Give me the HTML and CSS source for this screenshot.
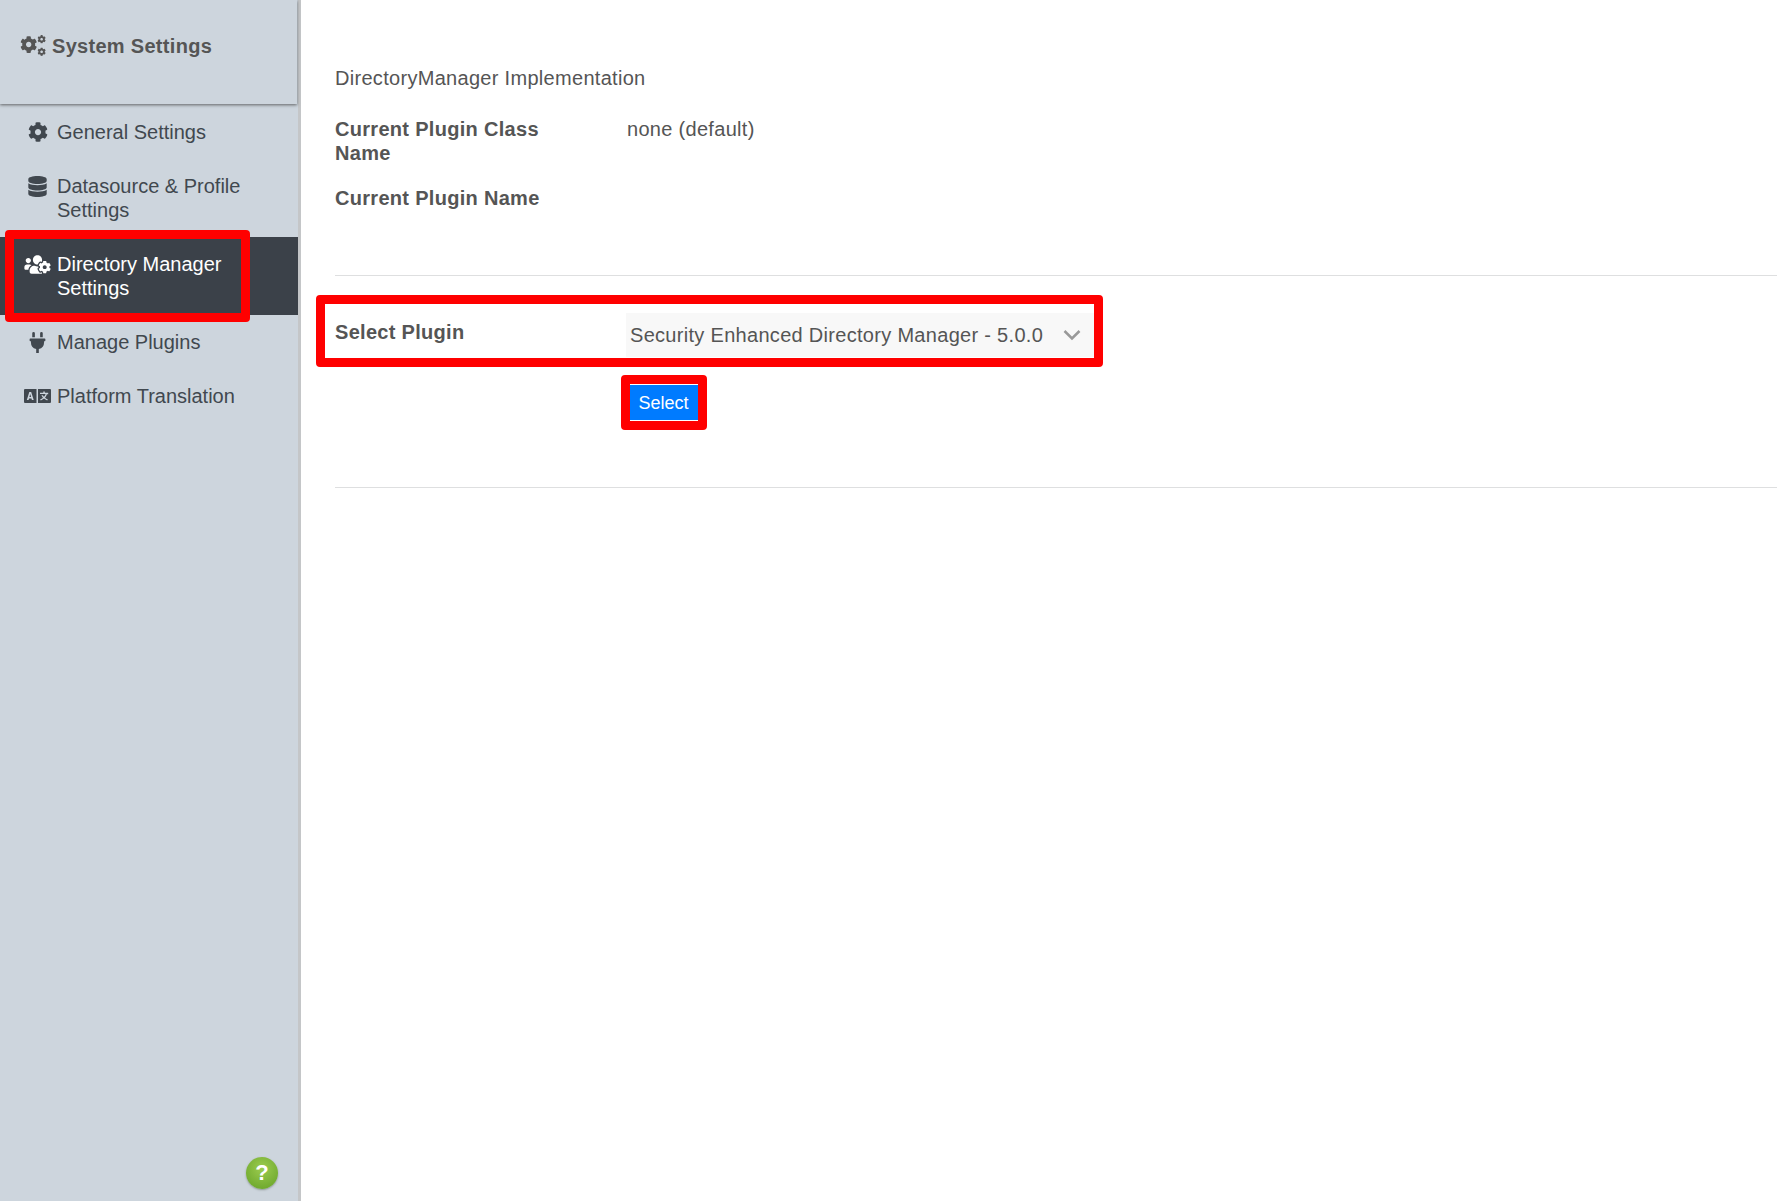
FILE: index.html
```html
<!DOCTYPE html>
<html lang="en">
<head>
<meta charset="utf-8">
<title>System Settings</title>
<link rel="stylesheet" href="styles.css">
</head>
<body>
<svg class="defs" aria-hidden="true">
  <symbol id="cog" viewBox="0 0 512 512"><path d="M487.4 315.7l-42.6-24.6c4.3-23.2 4.3-47 0-70.2l42.6-24.6c4.9-2.8 7.1-8.6 5.5-14-11.1-35.6-30-67.8-54.7-94.6-3.8-4.1-10-5.1-14.8-2.3L380.8 110c-17.9-15.4-38.5-27.3-60.8-35.1V25.8c0-5.6-3.9-10.5-9.4-11.7-36.7-8.2-74.3-7.8-109.2 0-5.5 1.2-9.4 6.1-9.4 11.7V75c-22.2 7.9-42.8 19.8-60.8 35.1L88.7 85.5c-4.9-2.8-11-1.9-14.8 2.3-24.7 26.7-43.6 58.9-54.7 94.6-1.7 5.4.6 11.2 5.5 14L67.3 221c-4.3 23.2-4.3 47 0 70.2l-42.6 24.6c-4.9 2.8-7.1 8.6-5.5 14 11.1 35.6 30 67.8 54.7 94.6 3.8 4.1 10 5.1 14.8 2.3l42.6-24.6c17.9 15.4 38.5 27.3 60.8 35.1v49.2c0 5.6 3.9 10.5 9.4 11.7 36.7 8.2 74.3 7.8 109.2 0 5.5-1.2 9.4-6.1 9.4-11.7v-49.2c22.2-7.9 42.8-19.8 60.8-35.1l42.6 24.6c4.9 2.8 11 1.9 14.8-2.3 24.7-26.7 43.6-58.9 54.7-94.6 1.5-5.5-.7-11.3-5.6-14.1zM256 336c-44.1 0-80-35.9-80-80s35.9-80 80-80 80 35.9 80 80-35.9 80-80 80z"/></symbol>
</svg>
<div class="app">
  <aside class="sidebar">
    <header class="side-head">
      <svg class="gears" viewBox="0 0 27 24"><use href="#cog" x="0" y="2" width="18" height="18"/><use href="#cog" x="18" y="1" width="9" height="9"/><use href="#cog" x="18" y="14" width="9" height="9"/></svg>
      <span>System Settings</span>
    </header>
    <nav class="nav">
      <a class="nav-item"><span class="nav-icon"><svg class="i-cog" viewBox="0 0 512 512"><use href="#cog"/></svg></span><span>General Settings</span></a>
      <a class="nav-item"><span class="nav-icon"><svg class="i-db" viewBox="0 0 448 512"><path d="M448 73.143v45.714C448 159.143 347.667 192 224 192S0 159.143 0 118.857V73.143C0 32.857 100.333 0 224 0s224 32.857 224 73.143zM448 176v102.857C448 319.143 347.667 352 224 352S0 319.143 0 278.857V176c48.125 33.143 136.208 48.572 224 48.572S399.874 209.143 448 176zm0 160v102.857C448 479.143 347.667 512 224 512S0 479.143 0 438.857V336c48.125 33.143 136.208 48.572 224 48.572S399.874 369.143 448 336z"/></svg></span><span>Datasource &amp; Profile Settings</span></a>
      <a class="nav-item active"><span class="nav-icon"><svg class="i-users" viewBox="0 0 640 512"><path d="M610.5 341.3c2.6-14.1 2.6-28.5 0-42.6l25.8-14.9c3-1.7 4.3-5.2 3.3-8.5-6.7-21.6-18.2-41.2-33.2-57.4-2.3-2.5-6-3.1-9-1.4l-25.8 14.9c-10.9-9.3-23.4-16.5-36.9-21.3v-29.8c0-3.4-2.4-6.4-5.7-7.1-22.3-5-45-4.8-66.2 0-3.3.7-5.7 3.7-5.7 7.1v29.8c-13.5 4.8-26 12-36.9 21.3l-25.8-14.9c-2.9-1.7-6.7-1.1-9 1.4-15 16.2-26.5 35.8-33.2 57.4-1 3.3.4 6.8 3.3 8.5l25.8 14.9c-2.6 14.1-2.6 28.5 0 42.6l-25.8 14.9c-3 1.7-4.3 5.2-3.3 8.5 6.7 21.6 18.2 41.1 33.2 57.4 2.3 2.5 6 3.1 9 1.4l25.8-14.9c10.9 9.3 23.4 16.5 36.9 21.3v29.8c0 3.4 2.4 6.4 5.7 7.1 22.3 5 45 4.8 66.2 0 3.3-.7 5.7-3.7 5.7-7.1v-29.8c13.5-4.8 26-12 36.9-21.3l25.8 14.9c2.9 1.7 6.7 1.1 9-1.4 15-16.2 26.5-35.8 33.2-57.4 1-3.3-.4-6.8-3.3-8.5l-25.8-14.9zM496 368.5c-26.8 0-48.5-21.8-48.5-48.5s21.8-48.5 48.5-48.5 48.5 21.8 48.5 48.5-21.7 48.5-48.5 48.5zM96 224c35.3 0 64-28.7 64-64s-28.7-64-64-64-64 28.7-64 64 28.7 64 64 64zm224 32c1.9 0 3.7-.5 5.6-.6 8.3-21.7 20.5-42.1 36.3-59.2 7.4-8 17.9-12.6 28.9-12.6 6.9 0 13.7 1.8 19.6 5.3l7.9 4.6c.8-.5 1.6-.9 2.4-1.4 7-14.6 11.2-30.8 11.2-48 0-61.9-50.1-112-112-112S208 82.1 208 144c0 61.9 50.1 112 112 112zm105.2 194.5c-2.3-1.2-4.6-2.6-6.8-3.9-8.2 4.8-15.3 9.8-27.5 9.8-10.9 0-21.4-4.6-28.9-12.6-18.3-19.8-32.3-43.9-40.2-69.6-10.7-34.5 24.9-49.7 25.8-50.3-.1-2.6-.1-5.2 0-7.8l-7.9-4.6c-3.8-2.2-7-5-9.8-8.1-3.3.2-6.5.6-9.8.6-24.6 0-47.6-6-68.5-16h-8.3C179.6 288 128 339.6 128 403.2V432c0 26.5 21.5 48 48 48h255.4c-3.7-6-6.2-12.8-6.2-20.1v-9.4zM173.1 274.6C161.5 263.1 145.6 256 128 256H64c-35.3 0-64 28.7-64 64v32c0 17.7 14.3 32 32 32h65.9c6.3-47.4 34.9-87.3 75.2-109.4z"/></svg></span><span>Directory Manager Settings</span></a>
      <a class="nav-item"><span class="nav-icon"><svg class="i-plug" viewBox="0 0 384 512"><path d="M320,32a32,32,0,0,0-64,0v96h64Zm48,128H16A16,16,0,0,0,0,176v32a16,16,0,0,0,16,16H32v32A160.07,160.07,0,0,0,160,412.8V512h64V412.8A160.07,160.07,0,0,0,352,256V224h16a16,16,0,0,0,16-16V176A16,16,0,0,0,368,160ZM128,32a32,32,0,0,0-64,0v96h64Z"/></svg></span><span>Manage Plugins</span></a>
      <a class="nav-item"><span class="nav-icon"><svg class="i-lang" viewBox="0 0 27 14"><path fill-rule="evenodd" d="M0 1a1 1 0 0 1 1-1h11.500v14H1a1 1 0 0 1-1-1zM5.300 3 2.800 11h1.800l.4-1.500h2.500l.4 1.500h1.800L7.200 3zM5.400 8l.85-3 .85 3z"/><path fill-rule="evenodd" d="M14 0h12a1 1 0 0 1 1 1v12a1 1 0 0 1-1 1H14zM19.300 2.500v1.200h-3.300v1.300h5.600c-.3 1-.9 2-1.600 2.800-.5-.5-.9-1-1.200-1.600h-1.400c.4.900.9 1.700 1.600 2.500-.9.700-1.800 1.200-2.800 1.500l.6 1.200c1.200-.4 2.200-1 3.200-1.800.9.800 2 1.400 3.200 1.800l.6-1.200c-1-.3-2-.8-2.800-1.500.9-1 1.600-2.200 1.900-3.500h1.300V3.700h-3.400V2.500z"/></svg></span><span>Platform Translation</span></a>
    </nav>
    <div class="help">?</div>
  </aside>
  <main class="main">
    <p class="title">DirectoryManager Implementation</p>
    <div class="row row-first"><strong class="label">Current Plugin Class Name</strong><span>none (default)</span></div>
    <div class="row row-name"><strong class="label">Current Plugin Name</strong></div>
    <hr class="rule rule-top">
    <div class="row row-select">
      <strong class="label label-select">Select Plugin</strong>
      <div class="select"><span>Security Enhanced Directory Manager - 5.0.0</span>
        <svg class="chev" viewBox="0 0 18 12"><path d="M1.500 2 9 9.500 16.500 2"/></svg>
      </div>
    </div>
    <div class="row row-btn"><span></span><button class="btn">Select</button></div>
    <hr class="rule rule-bottom">
  </main>
</div>
<div class="mark mark-nav"></div>
<div class="mark mark-select"></div>
<div class="mark mark-btn"></div>
</body>
</html>
```
FILE: styles.css
```css
* { box-sizing: border-box; }
html, body { margin: 0; height: 100%; }
body {
  font-family: "Liberation Sans", Arial, sans-serif;
  font-size: 20px;
  line-height: 24px;
  color: #555;
  background: #fff;
  overflow: hidden;
}
.defs { width: 0; height: 0; position: absolute; }
.app { display: flex; height: 1201px; }

.sidebar {
  width: 301px;
  flex: none;
  display: flex;
  flex-direction: column;
  background: #cdd5dd;
  border-right: 3px solid #c4c6c8;
}
.side-head {
  height: 104px;
  width: 297px;
  padding: 34px 0 0 20px;
  display: flex;
  align-items: flex-start;
  gap: 6px;
  font-weight: 700;
  color: #555;
  letter-spacing: .3px;
  box-shadow: 0 1px 3px rgba(60, 60, 60, .75);
  background: #cdd5dd;
}
.gears { width: 26px; height: 23px; fill: #555; flex: none; }
.nav { margin-top: 1px; display: flex; flex-direction: column; }
.nav-item {
  display: flex;
  padding: 15px 20px 15px 18px;
  color: #41484f;
}
.nav-item.active { background: #3b4149; color: #fff; }
.nav-icon {
  width: 39px;
  height: 24px;
  flex: none;
  display: flex;
  align-items: center;
  justify-content: center;
  fill: currentColor;
}
.i-cog { width: 20px; height: 20px; }
.i-db { width: 19px; height: 21px; }
.i-users { width: 27px; height: 21px; }
.i-plug { width: 17px; height: 21px; }
.i-lang { width: 27px; height: 14px; }
.help {
  margin: auto 20px 12px auto;
  width: 32px;
  height: 32px;
  border-radius: 50%;
  background: radial-gradient(circle at 50% 35%, #9ccc4f, #6fa92e 80%);
  box-shadow: 0 1px 2px rgba(80, 90, 80, .5);
  color: #fff;
  font-weight: 700;
  font-size: 22px;
  line-height: 32px;
  text-align: center;
}

.main { flex: 1; min-width: 0; padding: 66px 0 0 34px; }
.title { margin: 0; letter-spacing: .3px; }
.row { display: grid; grid-template-columns: 250px 1fr; column-gap: 42px; letter-spacing: .3px; }
.row-first { margin-top: 27px; }
.row-name { margin-top: 21px; }
.label { font-weight: 700; }
.rule { border: 0; border-top: 1px solid #dedfe0; margin: 0; }
.rule-top { margin-top: 65px; }
.row-select { margin-top: 37px; }
.label-select { padding-top: 7px; }
.select {
  width: 468px;
  height: 44px;
  margin-left: -1px;
  padding: 0 13px 0 4px;
  background: #f8f8f8;
  display: flex;
  align-items: center;
  justify-content: space-between;
}
.chev { width: 18px; height: 12px; fill: none; stroke: #999; stroke-width: 2.500; }
.row-btn { margin-top: 28px; }
.btn {
  justify-self: start;
  margin-left: 2px;
  width: 69px;
  height: 35px;
  padding: 0;
  border: 0;
  background: #007bff;
  color: #fff;
  font: 18px/24px "Liberation Sans", Arial, sans-serif;
}
.rule-bottom { margin-top: 67px; }

.mark { position: absolute; border: 9px solid #f00; border-radius: 4px; }
.mark-nav { left: 5px; top: 230px; width: 245px; height: 92px; }
.mark-select { left: 316px; top: 295px; width: 787px; height: 72px; }
.mark-btn { left: 621px; top: 375px; width: 86px; height: 55px; }
```
